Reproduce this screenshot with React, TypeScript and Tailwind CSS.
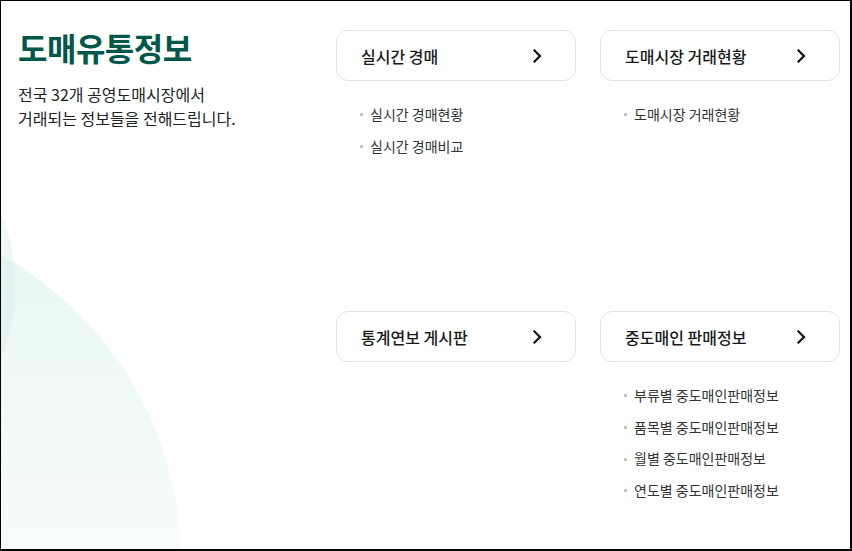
import React from "react";

const Chevron = () => (
  <svg width="10" height="14" viewBox="0 0 10 14" fill="none" aria-hidden="true">
    <path d="M2.5 1.5 L8 7 L2.5 12.5" stroke="#111" strokeWidth="2.2" strokeLinecap="square" strokeLinejoin="miter" />
  </svg>
);

type Section = { title: string; items: string[] };

const sections: Section[] = [
  { title: "실시간 경매", items: ["실시간 경매현황", "실시간 경매비교"] },
  { title: "도매시장 거래현황", items: ["도매시장 거래현황"] },
  { title: "통계연보 게시판", items: [] },
  {
    title: "중도매인 판매정보",
    items: ["부류별 중도매인판매정보", "품목별 중도매인판매정보", "월별 중도매인판매정보", "연도별 중도매인판매정보"],
  },
];

function Card({ s }: { s: Section }) {
  return (
    <div className="flex flex-col">
      <a className="flex h-[51px] items-center justify-between rounded-[12px] border border-[#e3e3e3] bg-white pl-[24px] pr-[33px] text-[16px] font-medium text-[#1a1a1a]">
        <span>{s.title}</span>
        <Chevron />
      </a>
      {s.items.length > 0 && (
        <ul className="mt-[18px] flex flex-col pl-[24px]">
          {s.items.map((it) => (
            <li key={it} className="flex items-center text-[14px] leading-[31.7px] text-[#333]">
              <span className="mr-[7px] h-[3px] w-[3px] rounded-full bg-[#b5b5b5]" />
              {it}
            </li>
          ))}
        </ul>
      )}
    </div>
  );
}

export default function App() {
  return (
    <div
      className="relative h-[551px] w-[852px] overflow-hidden border-t border-l border-r-2 border-b-2 border-black bg-white"
      style={{ fontFamily: '"Noto Sans CJK KR", "Noto Sans", sans-serif' }}
    >
      <div className="pointer-events-none absolute left-[-520px] top-[210px] h-[700px] w-[700px] rounded-full bg-gradient-to-b from-[#e6f7f3] via-[#f4fbf9] via-40% to-white to-60%" />
      <div className="pointer-events-none absolute left-[-67px] top-[190px] h-[190px] w-[81px] rounded-[50%] bg-[#d9ecea] opacity-40" />
      <div className="relative flex">
        <div className="w-[335px] shrink-0 pl-[17px] pt-[25px]">
          <h1 className="text-[32px] font-bold leading-[42px] tracking-[-0.5px] text-[#00574a]">도매유통정보</h1>
          <p className="mt-[14px] text-[16px] leading-[24px] text-[#222]">
            전국 32개 공영도매시장에서
            <br />
            거래되는 정보들을 전해드립니다.
          </p>
        </div>
        <div className="grid grid-cols-[240px_240px] grid-rows-[281px_auto] gap-x-[24px] pt-[29px]">
          {sections.map((s) => (
            <Card key={s.title} s={s} />
          ))}
        </div>
      </div>
    </div>
  );
}
